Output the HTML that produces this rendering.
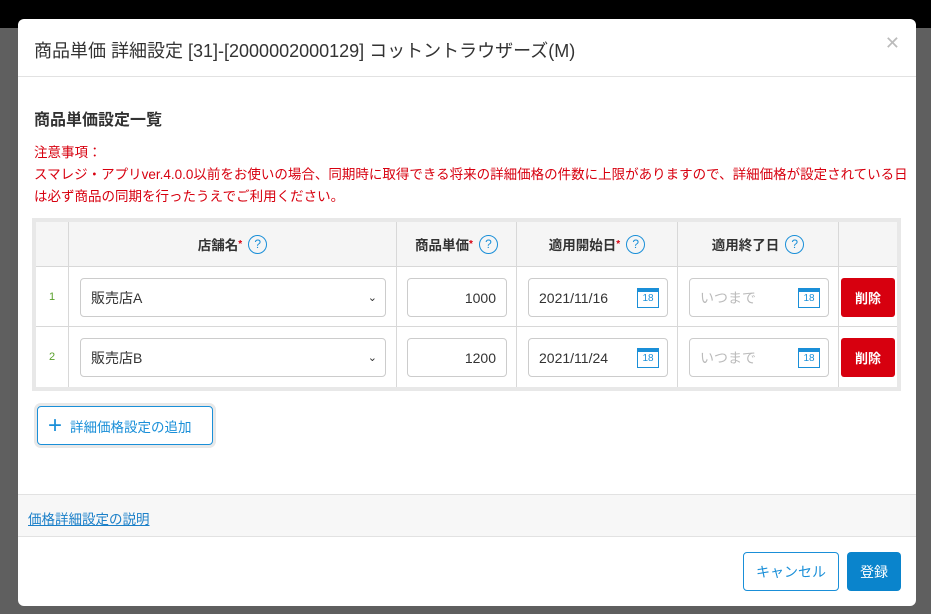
<!DOCTYPE html>
<html><head><meta charset="utf-8"><style>
*{box-sizing:border-box;margin:0;padding:0}
body{width:931px;height:614px;overflow:hidden;background:#5f5f5f;font-family:"Liberation Sans","Noto Sans CJK JP",sans-serif;position:relative}
.top{position:absolute;left:0;top:0;width:931px;height:28px;background:#000}
.modal{position:absolute;left:18px;top:19px;width:898px;height:587px;background:#fff;border-radius:6px;overflow:hidden}
.hd{height:58px;border-bottom:1px solid #e2e2e2;padding:18px 16px;font-size:18px;color:#333}
.x{position:absolute;right:16px;top:14px;color:#bbb;font-size:18px}
h4{position:absolute;left:16px;top:87px;font-size:16px;font-weight:bold;color:#333}
.note{position:absolute;left:16px;top:123px;font-size:13.5px;color:#d7000f;line-height:22px;width:880px}
.tbl{position:absolute;left:14px;top:199px;width:869px;height:173px;border:4px solid #e8e8e8}
.c{position:absolute;border-right:1px solid #d8d8d8;border-bottom:1px solid #d8d8d8}
.th{background:#f5f5f5;font-weight:bold;font-size:13.5px;color:#333;display:flex;align-items:center;justify-content:center}
.q{display:inline-block;width:19px;height:19px;border:1.5px solid #1a8fd8;border-radius:50%;color:#1a8fd8;font-size:12px;font-weight:normal;text-align:center;line-height:16px;margin-left:6px}
.r{color:#d7000f;font-size:10px;vertical-align:top}
.n{color:#5aa02c;font-size:11px;display:flex;align-items:center;justify-content:center}
.in{position:absolute;border:1px solid #ccc;border-radius:4px;height:39px;font-size:14px;color:#333;display:flex;align-items:center;padding:0 10px;background:#fff}
.cal{position:absolute;right:8px;top:9px;width:22px;height:20px;border:1.5px solid #1a8fd8;border-top-width:4px;color:#1a8fd8;font-size:10px;text-align:center;line-height:14px}
.del{position:absolute;width:54px;height:39px;background:#d7000f;border-radius:3px;color:#fff;font-size:13px;font-weight:bold;display:flex;align-items:center;justify-content:center}
.add{position:absolute;left:19px;top:387px;width:176px;height:39px;border:1px solid #1a8fd8;box-shadow:0 0 0 3px #e8e8e8;border-radius:4px;color:#1a8fd8;font-size:13.5px;display:flex;align-items:center;padding-left:10px}
.gray{position:absolute;left:0;top:475px;width:898px;height:43px;background:#f7f7f7;border-top:1px solid #e2e2e2;border-bottom:1px solid #e2e2e2}
.gray a{position:absolute;left:10px;top:13px;font-size:13.5px;color:#1a7fc8;text-decoration:underline}
.btn{position:absolute;top:533px;height:39px;border-radius:4px;font-size:14px;display:flex;align-items:center;justify-content:center}
</style></head><body>
<div class="top"></div>
<div class="modal">
<div class="hd">商品単価 詳細設定 [31]-[2000002000129] コットントラウザーズ(M)</div>
<div class="x">✕</div>
<h4>商品単価設定一覧</h4>
<div class="note">注意事項：<br>スマレジ・アプリver.4.0.0以前をお使いの場合、同期時に取得できる将来の詳細価格の件数に上限がありますので、詳細価格が設定されている日は必ず商品の同期を行ったうえでご利用ください。</div>
<div class="tbl">
<div class="c th" style="left:0;top:0;width:33px;height:45px"></div>
<div class="c th" style="left:33px;top:0;width:328px;height:45px">店舗名<span class="r">*</span><span class="q">?</span></div>
<div class="c th" style="left:361px;top:0;width:120px;height:45px">商品単価<span class="r">*</span><span class="q">?</span></div>
<div class="c th" style="left:481px;top:0;width:161px;height:45px">適用開始日<span class="r">*</span><span class="q">?</span></div>
<div class="c th" style="left:642px;top:0;width:161px;height:45px">適用終了日<span class="q">?</span></div>
<div class="c th" style="left:803px;top:0;width:58px;height:45px;border-right:0"></div>
<div class="c n" style="left:0;top:45px;width:33px;height:60px">1</div>
<div class="c" style="left:33px;top:45px;width:328px;height:60px"></div>
<div class="c" style="left:361px;top:45px;width:120px;height:60px"></div>
<div class="c" style="left:481px;top:45px;width:161px;height:60px"></div>
<div class="c" style="left:642px;top:45px;width:161px;height:60px"></div>
<div class="c n" style="left:0;top:105px;width:33px;height:60px;border-bottom:0">2</div>
<div class="c" style="left:33px;top:105px;width:328px;height:60px;border-bottom:0"></div>
<div class="c" style="left:361px;top:105px;width:120px;height:60px;border-bottom:0"></div>
<div class="c" style="left:481px;top:105px;width:161px;height:60px;border-bottom:0"></div>
<div class="c" style="left:642px;top:105px;width:161px;height:60px;border-bottom:0"></div>
<div class="c" style="left:803px;top:45px;width:58px;height:60px;border-right:0"></div>
<div class="in" style="left:44px;top:56px;width:306px">販売店A<span style="position:absolute;right:8px;font-size:11px">&#x2304;</span></div>
<div class="in" style="left:44px;top:116px;width:306px">販売店B<span style="position:absolute;right:8px;font-size:11px">&#x2304;</span></div>
<div class="in" style="left:371px;top:56px;width:100px;justify-content:flex-end">1000</div>
<div class="in" style="left:371px;top:116px;width:100px;justify-content:flex-end">1200</div>
<div class="in" style="left:492px;top:56px;width:140px">2021/11/16<span class="cal">18</span></div>
<div class="in" style="left:492px;top:116px;width:140px">2021/11/24<span class="cal">18</span></div>
<div class="in" style="left:653px;top:56px;width:140px;color:#bbb">いつまで<span class="cal">18</span></div>
<div class="in" style="left:653px;top:116px;width:140px;color:#bbb">いつまで<span class="cal">18</span></div>
<div class="del" style="left:805px;top:56px">削除</div>
<div class="del" style="left:805px;top:116px">削除</div>
</div>
<div class="add"><span style="font-size:24px;font-weight:300;margin-right:8px;line-height:1">+</span>詳細価格設定の追加</div>
<div class="gray"><a>価格詳細設定の説明</a></div>
<div class="btn" style="left:725px;width:96px;border:1px solid #1a8fd8;color:#1a8fd8">キャンセル</div>
<div class="btn" style="left:829px;width:54px;background:#0a84cc;color:#fff">登録</div>
</div>
</body></html>
